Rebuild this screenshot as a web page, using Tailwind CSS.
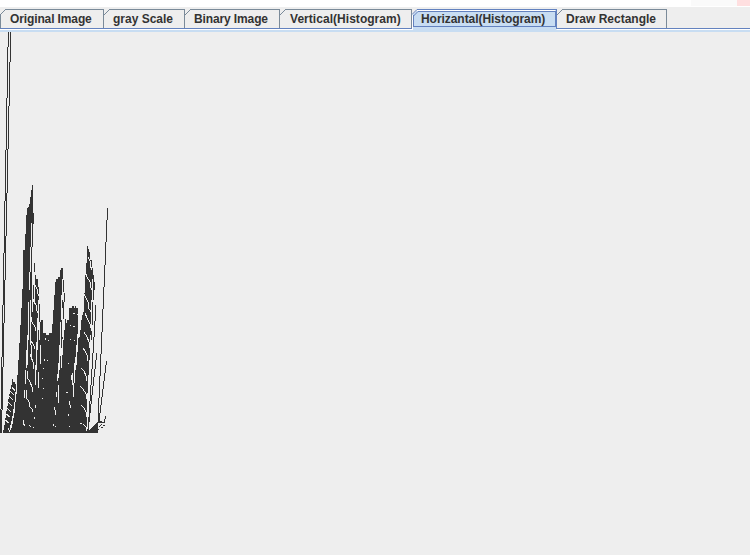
<!DOCTYPE html>
<html lang="en"><head><meta charset="utf-8"><title>Histogram</title>
<script src="https://cdn.jsdelivr.net/npm/@tailwindcss/browser@4"></script></head>
<body class="w-[750px] h-[555px] overflow-hidden bg-[#eeeeee] flex flex-col font-['Liberation_Sans',Arial,sans-serif] text-[#333333]">
<div class="h-[7px] bg-white flex justify-end shrink-0"><div class="w-[46px] h-[6px] bg-[#fafafa]"></div><div class="w-[13px] h-[6px] bg-[#ffdfe0]"></div></div>
<nav class="relative h-[25px] shrink-0 pt-[2px]">
<svg class="absolute left-0 top-0" width="750" height="25" viewBox="0 7 750 25" shape-rendering="crispEdges">
<path fill="#c8ddf2" d="M0 30H750V32H0zM413 14L418 9H556V30H413z"/>
<path fill="#fff" d="M0 29H413V30H0zM557 29H750V30H557z"/>
<path fill="none" stroke="#7a8a99" d="M.5 28V14.500L5.500 9.500H103.500V28M109 9.500H184.500V28M190 9.500H279.500V28M285 9.500H411.500V28M562 9.500H666.500V28"/>
<path fill="none" stroke="#7a8a99" shape-rendering="auto" d="M104 15L109.500 9.500M185 15L190.500 9.500M280 15L285.500 9.500M557 15L562.500 9.500"/>
<path fill="none" stroke="#6382bf" d="M0 28.500H412M556 28.500H750M417 9.500H556.500V29M413.500 27V15M418 11.500H555.500V26.500H413"/>
<path fill="none" stroke="#6382bf" shape-rendering="auto" d="M412 14.500L417 9.500M413.500 16L418 11.500"/>
<path fill="none" stroke="#fff" d="M412.500 29V15M417 10.500H555"/>
</svg>
<div class="relative flex h-[20px] items-center text-[12px] font-bold leading-none whitespace-nowrap">
<span class="w-[104px] pl-[10px] tracking-[-0.12px]">Original Image</span><span class="w-[81px] pl-[9px]">gray Scale</span><span class="w-[95px] pl-[9px] tracking-[-0.12px]">Binary Image</span><span class="w-[133px] pl-[10px] tracking-[0.04px]">Vertical(Histogram)</span><span class="w-[144px] pl-[8px] tracking-[-0.05px]">Horizantal(Histogram)</span><span class="pl-[9px]">Draw Rectangle</span>
</div></nav>
<main class="flex-1">
<svg width="120" height="410" viewBox="0 32 120 410" shape-rendering="crispEdges">
<!-- filled masses -->
<path fill="#333" d="M0 410H2V430H3V433H98V423H102V421H98L88 431V375H91V340H93V300H94V275H93V268H92V260H90V252H89V249H88V246H87V257H86V275H85V293H84V312H83V315H82V320H81V330H80V337H79V325H78V308H76V306H75V308H74V306H72V308H69V320H67V323H66V319H65V330H64V302H63V268H61V270H60V277H58V279H56V282H55V295H54V310H53V324H52V333H49V335H46V333H43V320H41V322H40V340H39V287H38V279H36V275H35V285H33V185H32V190H31V197H30V204H29V207H28V208H27V215H26V234H25V250H23V289H22V308H21V325H20V343H19V360H18V375H17V394H16V384H15V382H13V379H12V385H11V389H10V394H9V399H8V406H7V411H6V418H5V425H4V430H2V410H0z"/>
<!-- pale gaps between the strokes -->
<g fill="none" stroke="#eee">
<path d="M31.500 223V247M30.500 247V272M32.500 247V312M29.500 272V290M30.500 300V345M28.500 302V340M27.500 335V365M26.500 350V368M25.500 370V384M24.500 390V398M31.500 345V360M34.500 285V303M38.500 300V330M37.500 318V350M36.500 342V370M35.500 365V385M35.500 405V408M39.500 325V333M40.500 345V364M38.500 372V388M34.500 417V419"/>
<path d="M35 285l2 4v3l2 4M33 299l1 3 2 3v4l2 4M31 317l1 5 3 5v4M30 335v4l4 7v3M30 354l3 8 1 7M27 371v6l3 5 2 5v5M26 390v7l3 5 1 5 2 2v3M23 420v3l2 3M29 425l2 2M33 427h1"/>
<path d="M62.500 279V300M61.500 295V320M62.500 308V337M60.500 322V356M59.500 345V370M58.500 363V378M61.500 348V368M57.500 374V381M56.500 392V397M58.500 385V403M54.500 407V410M55.500 410V415M53.500 424V426M55.500 426V427"/>
<path d="M63.500 319V340M62.500 339V355M78.500 320V338M77.500 334V352M76.500 345V365M75.500 357V370M74.500 363V383M72.500 373V385M71.500 375V380M73.500 383V397M69.500 401V405M70.500 405V408M68.500 414V416M69.500 426V427"/>
<path d="M86.500 257V263M92.500 279V302M91.500 300V331M92.500 325V355M90.500 335V375M89.500 360V395M88.500 380V420M87.500 393V429"/>
<path d="M88 257l2 4v4l2 5M86 274l1 3 3 5v4l2 4M84 294l2 4 2 4v5l3 5M85 313l2 5 3 6v4M84 332l3 5 2 5v6M83 348l2 3 2 4v6M81 368l3 3 2 5v5M80 386l3 3 3 5v5M81 405l3 3 2 4v5M80 423h2M83 424l3 3v4"/>
<path d="M45.500 338V340M48 340.500h1M44.500 359V361M47 360.500h1M43 368.500h1M42 378.500h1M43 388.500h1M42 398.500h1M73 313.500h2M77 314.500h1M70 325.500h1M73 326.500h2M70 339.500h1M74 340.500h1M68 363.500h1M66 392.500h2"/>
<path d="M10 391l4 4M9 396l4 4M8 402l4 4M7 408l4 4M6 414l4 3M5 420l4 3M12 387l3 4M8 428l2 4M15.500 392V402M14.500 402V413M13.500 409V418M12.500 416V424M11.500 421V428M10.500 425V430M2.500 411V430"/>
</g>
<!-- single strokes -->
<path fill="none" stroke="#333" d="M8.500 32V47M7.500 47V98M6.500 98V150M5.500 150V201M4.500 201V253M3.500 253V305M2.500 305V357M1.500 357V409M.5 409V433M10.500 32V62M9.500 62V106M8.500 106V149M7.500 149V193M6.500 193V236M5.500 236V280M4.500 280V323M3.500 323V367M2.500 367V410M1.500 410V433M33.500 213V224M34.500 263V272M63.500 280V292M64.500 293V302M38.500 287V293M39.500 304V322M94.500 282V290M95.500 305V321M94.500 321V337M93.500 337V353M92.500 353V369M91.500 369V385M90.500 385V401M89.500 401V417M88.500 417V432"/>
<path fill="none" stroke="#333" d="M107.500 208V220M106.500 220V242M105.500 242V265M104.500 265V287M103.500 287V309M102.500 309V332M101.500 332V354M100.500 354V376M99.500 376V398M98.500 398V422M96.500 353V360M95.500 360V369M94.500 369V377M93.500 377V386M92.500 386V395M91.500 395V404M90.500 404V413M89.500 413V422M88.500 422V431M106.500 361V365M105.500 365V373M104.500 373V381M103.500 381V389M102.500 389V397M101.500 397V405M100.500 405V413M99.500 413V421M105.500 416V419M104.500 419V422M101 422.500H105M99 426.500l3 -2M101 427.500H103M103 425.500H105M97 429.500H99"/>
</svg>
</main>
</body></html>
